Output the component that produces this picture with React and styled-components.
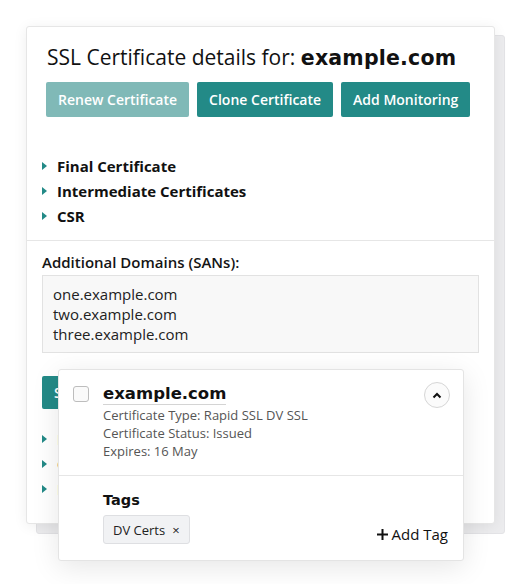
import React from 'react';
import styled, { createGlobalStyle } from 'styled-components';

const GlobalStyle = createGlobalStyle`
    body {
        margin: 0;
        background: #ffffff;
        font-family: "Open Sans", "Noto Sans", sans-serif;
        color: #111;
    }
`;

const Page = styled.div`
    padding: 26px 0 60px 26px;
`;

const Stack = styled.div`
    position: relative;
    z-index: 0;
    width: 469px;

    &::before {
        content: "";
        position: absolute;
        left: 10px;
        top: 9px;
        right: -10px;
        bottom: -10px;
        background: #ececee;
        border: 1px solid #e3e3e6;
        border-radius: 3px;
        z-index: -1;
    }
`;

const Card = styled.div`
    height: 498px;
    background: #fff;
    border: 1px solid #e6e6e6;
    border-radius: 3px;
    box-shadow: 0 2px 14px rgba(0, 0, 0, 0.07);
    box-sizing: border-box;
    overflow: hidden;
`;

const Header = styled.div`
    padding: 15px 20px 0 19px;
`;

const Title = styled.h1`
    margin: 0 0 0 1px;
    font-size: 21px;
    line-height: 30px;
    font-weight: 400;
    color: #111;
    white-space: nowrap;

    b {
        font-family: "DejaVu Sans", sans-serif;
        font-weight: 700;
        font-size: 20.5px;
        letter-spacing: 0.2px;
    }
`;

const ButtonRow = styled.div`
    display: flex;
    gap: 8px;
    margin-top: 9px;
`;

const Button = styled.button`
    flex: none;
    height: 35px;
    padding: 0 12px;
    border: none;
    border-radius: 2px;
    background: ${p => (p.$disabled ? '#80b9b7' : '#238a87')};
    color: #fff;
    font-family: "Open Sans", sans-serif;
    font-size: 14px;
    font-weight: 600;
    white-space: nowrap;
`;

const Section = styled.div`
    padding: ${p => p.$pad || '0 15px'};
    border-bottom: ${p => (p.$divider ? '1px solid #e6e6e6' : 'none')};
`;

const Toggles = styled.ul`
    list-style: none;
    margin: 0;
    padding: 0;
`;

const Toggle = styled.li`
    display: flex;
    align-items: center;
    height: 25px;
    font-size: 15px;
    font-weight: 700;
    color: #111;
    white-space: nowrap;

    &::before {
        content: "";
        width: 0;
        height: 0;
        border-top: 4px solid transparent;
        border-bottom: 4px solid transparent;
        border-left: 5px solid #238a87;
        margin-right: 10px;
    }
`;

const Label = styled.div`
    font-size: 15px;
    line-height: 20px;
    font-weight: 600;
    margin-bottom: 3px;
    color: #151515;
`;

const Domains = styled.div`
    background: #f8f8f8;
    border: 1px solid #e2e2e2;
    padding: 8px 10px;
    font-size: 15px;
    line-height: 20px;
    color: #222;
`;

const SaveButton = styled(Button)`
    height: 33px;
    margin: 23px 0 17px;
`;

const Popup = styled.div`
    position: absolute;
    left: 32px;
    top: 343px;
    width: 406px;
    background: #fff;
    border: 1px solid #e4e4e4;
    border-radius: 3px;
    box-shadow: 0 6px 28px rgba(0, 0, 0, 0.1);
    box-sizing: border-box;
`;

const PopupTop = styled.div`
    display: grid;
    grid-template-columns: 16px 1fr 26px;
    column-gap: 14px;
    align-items: start;
    padding: 12px 13px 15px 14px;
    border-bottom: 1px solid #e6e6e6;
`;

const Checkbox = styled.span`
    width: 14px;
    height: 14px;
    margin-top: 4px;
    border: 1px solid #bdbdbd;
    border-radius: 3px;
    background: #fafafa;
`;

const Domain = styled.div`
    display: inline-block;
    font-family: "DejaVu Sans", sans-serif;
    font-weight: 700;
    font-size: 16.5px;
    line-height: 20px;
    color: #111;
    border-bottom: 1px solid #d4d4d4;
    margin-bottom: 1px;
`;

const Meta = styled.div`
    font-size: 13px;
    line-height: 18px;
    color: #555;
    white-space: nowrap;
`;

const Collapse = styled.button`
    width: 26px;
    height: 26px;
    padding: 0;
    border: 1px solid #d6d6d6;
    border-radius: 50%;
    background: #fbfbfb;
    display: flex;
    align-items: center;
    justify-content: center;
`;

const PopupBottom = styled.div`
    display: flex;
    align-items: flex-end;
    justify-content: space-between;
    padding: 14px 15px 16px 44px;
`;

const TagsTitle = styled.div`
    font-family: "DejaVu Sans", sans-serif;
    font-weight: 700;
    font-size: 14.5px;
    line-height: 20px;
    margin-bottom: 5px;
`;

const Chip = styled.span`
    display: inline-flex;
    align-items: center;
    gap: 7px;
    height: 27px;
    padding: 0 9px;
    background: #f1f2f4;
    border: 1px solid #dedfe2;
    border-radius: 3px;
    font-size: 13px;
    color: #222;
    white-space: nowrap;
`;

const AddTag = styled.span`
    display: flex;
    align-items: center;
    gap: 4px;
    font-size: 15px;
    line-height: 20px;
    color: #111;
    margin-bottom: 0;
    white-space: nowrap;
`;

const App = () => {
    return (
        <Page>
            <GlobalStyle />
            <Stack>
                <Card>
                    <Header>
                        <Title>SSL Certificate details for: <b>example.com</b></Title>
                        <ButtonRow>
                            <Button $disabled>Renew Certificate</Button>
                            <Button>Clone Certificate</Button>
                            <Button>Add Monitoring</Button>
                        </ButtonRow>
                    </Header>
                    <Section $pad="36px 15px 12px" $divider>
                        <Toggles>
                            <Toggle>Final Certificate</Toggle>
                            <Toggle>Intermediate Certificates</Toggle>
                            <Toggle>CSR</Toggle>
                        </Toggles>
                    </Section>
                    <Section $pad="11px 15px 0">
                        <Label>Additional Domains (SANs):</Label>
                        <Domains>
                            one.example.com<br />
                            two.example.com<br />
                            three.example.com
                        </Domains>
                        <SaveButton>Save Changes</SaveButton>
                        <Toggles>
                            <Toggle>Monitoring</Toggle>
                            <Toggle>Order History</Toggle>
                            <Toggle>Notes</Toggle>
                        </Toggles>
                    </Section>
                </Card>

                <Popup>
                    <PopupTop>
                        <Checkbox />
                        <div>
                            <Domain>example.com</Domain>
                            <Meta>Certificate Type: Rapid SSL DV SSL</Meta>
                            <Meta>Certificate Status: Issued</Meta>
                            <Meta>Expires: 16 May</Meta>
                        </div>
                        <Collapse aria-label="Collapse">
                            <svg width="10" height="7" viewBox="0 0 10 7">
                                <path d="M1.5 5.5 L5 2 L8.5 5.5" fill="none" stroke="#111" strokeWidth="2" />
                            </svg>
                        </Collapse>
                    </PopupTop>
                    <PopupBottom>
                        <div>
                            <TagsTitle>Tags</TagsTitle>
                            <Chip>DV Certs <span>×</span></Chip>
                        </div>
                        <AddTag>
                            <svg width="11" height="11" viewBox="0 0 11 11">
                                <path d="M5.5 0 V11 M0 5.5 H11" stroke="#111" strokeWidth="2" />
                            </svg>
                            Add Tag
                        </AddTag>
                    </PopupBottom>
                </Popup>
            </Stack>
        </Page>
    );
};

export default App;
